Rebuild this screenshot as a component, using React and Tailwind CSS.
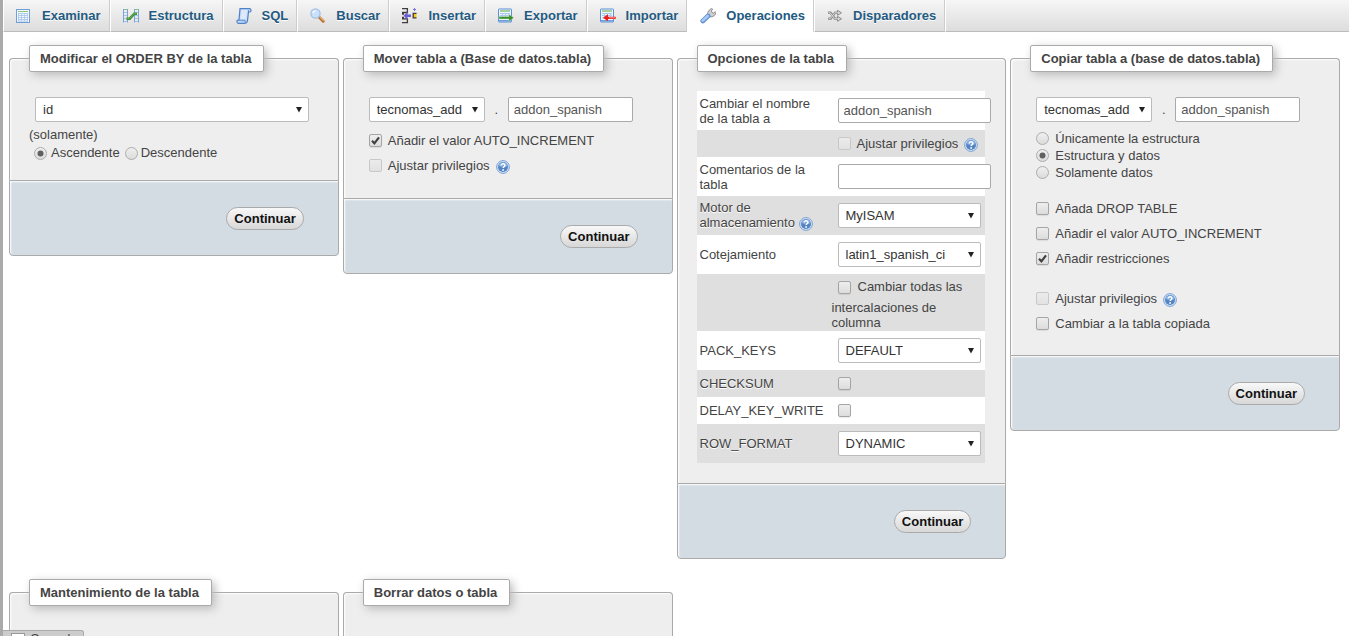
import React, { useId } from "react";

/* ---------- icons ---------- */

function Icon({ children }) {
  return (
    <svg width="16" height="16" viewBox="0 0 16 16" className="block shrink-0" aria-hidden="true">
      {children}
    </svg>
  );
}

function BrowseIcon() {
  return (
    <Icon>
      <rect x=".5" y="1.5" width="13" height="13" fill="#f4f9ff" stroke="#6f9edb" />
      <path d="M2 3.5h10" stroke="#8cc27c" />
      <path d="M2 5.5h10M2 7.5h10M2 9.5h10M2 11.5h10M2 13.200h10" stroke="#a9c6ea" strokeWidth=".9" />
      <path d="M2.500 5v8M5.500 5v8M8.500 5v8M11.500 5v8" stroke="#a9c6ea" strokeWidth=".8" />
    </Icon>
  );
}

function StructureIcon() {
  return (
    <Icon>
      <path d="M0 1.5h5M0 4.500h5M0 7.5h5M0 10.500h5M0 13.500h5" stroke="#a6c3ea" />
      <path d="M.5 1v13.5M4.500 1v13.5" stroke="#79a3dc" />
      <path d="M11 1.5h5M11 4.500h5M11 7.500h5M11 10.500h5M11 13.500h5" stroke="#a6c3ea" />
      <path d="M11.500 1v13.5M15.5 1v13.5" stroke="#79a3dc" />
      <path d="M1 1.500h3M12 1.500h3" stroke="#8cc27c" />
      <path d="M3.500 10.700h3.200l4.600-5h2.700" fill="none" stroke="#3a8f2e" strokeWidth="2.600" />
      <path d="M4.300 10.400h2.300l4.300-4.800h2.600" fill="none" stroke="#6dbb5c" strokeWidth=".9" />
    </Icon>
  );
}

function SqlIcon() {
  return (
    <Icon>
      <path d="M4 .7h9.500c1.800 0 2.100 2.800.5 3.300h-1.500l-1 8.500c-.3 2-1 2.800-2.500 2.800H2.500c-2 0-2.200-3-.5-3.200h1L4 .7z" fill="#c6dcf7" stroke="#4f82c8" strokeWidth="1.200" />
      <path d="M5.500 2h5.500l-1.200 9.500H4.500z" fill="#dceafb" />
      <path d="M2.500 12.200h6.500c.6 1 .6 2-.3 3" fill="#a8c8ef" stroke="#5e8fd0" />
      <path d="M12.500 4V2.300" stroke="#4f82c8" />
    </Icon>
  );
}

function SearchIcon() {
  return (
    <Icon>
      <path d="M9.500 9.500l3.700 3.700" stroke="#b9722f" strokeWidth="3" strokeLinecap="round" />
      <path d="M10.200 9.400l3.100 3" stroke="#e9b06f" strokeWidth="1.200" strokeLinecap="round" />
      <circle cx="5.500" cy="5.500" r="4.600" fill="#c9dffa" stroke="#a2c1e8" strokeWidth="1.300" />
      <path d="M3 5c.3-1.300 1.300-2 2.700-2" fill="none" stroke="#fff" strokeWidth="1.200" />
    </Icon>
  );
}

function InsertIcon() {
  return (
    <Icon>
      <path d="M0 .7h5.400v3.800H0M0 10.800h5.400v3.800H0M0 6h2M0 9.500h2" fill="none" stroke="#3d3d3d" strokeWidth="1.300" />
      <path d="M1.500 7.700l4-4v2.700h3.500v2.600H5.500v2.700z" fill="#6a5fd0" />
      <path d="M14.500 5.300h-3.300v4.600h3.300" fill="#f6c91c" stroke="#3d3d3d" strokeWidth="1.300" />
      <path d="M12.500 0v3M11 1.500h3" stroke="#7a70dc" />
    </Icon>
  );
}

function TransferTable({ arrow }) {
  return (
    <Icon>
      <rect x=".5" y="1" width="13" height="13" rx=".5" fill="#f1f7ff" stroke="#5b8fd6" />
      <path d="M2 3h10" stroke="#86c072" strokeWidth="1.400" />
      <path d="M2 5.500h10M2 7.500h10M2 10h10" stroke="#a9c6ea" />
      <path d="M4.500 5v6M7.500 5v6M10.500 5v6" stroke="#b4cdec" />
      <path d="M1 12.800h12" stroke="#6f9edb" strokeWidth="1.600" />
      {arrow}
    </Icon>
  );
}

function ExportIcon() {
  return (
    <TransferTable
      arrow={<path d="M1 8.600h10V6.200l4.800 3.600-4.800 3.600V11H1z" fill="#3a8f2e" stroke="#d8eed1" strokeWidth=".4" />}
    />
  );
}

function ImportIcon() {
  return (
    <TransferTable
      arrow={
        <>
          <path d="M15.700 8.700H8V6.300L3 9.800l5 3.500V11h7.700z" fill="#e8211c" />
          <path d="M9 9.800h6" stroke="#ff9a90" strokeWidth=".9" />
        </>
      }
    />
  );
}

function WrenchIcon() {
  return (
    <Icon>
      <path d="M8.300 8.400C6.600 6.500 7.800 2 11.600.6l1 .4-1.200 2.100.6 1.500 1.600.4 1.700-1.300.6.700c-.3 2.800-2.500 4.500-5 4.500z" fill="#d0d0d0" stroke="#858585" strokeWidth=".9" />
      <path d="M2.800 12.900L8 8" stroke="#5d8fd3" strokeWidth="4.800" strokeLinecap="round" />
      <path d="M2.800 12.600l4.900-4.700" stroke="#a9c9f4" strokeWidth="2.800" strokeLinecap="round" />
    </Icon>
  );
}

function TriggersIcon() {
  return (
    <Icon>
      <g fill="none" stroke="#8d8d8d" strokeWidth="2.400">
        <path d="M1 4.800h2.500l4.500 6h3.500M1 10.800h2.500l4.500-6h3.500" />
      </g>
      <path d="M10.500 2.300l4 2.500-4 2.500zM10.500 8.300l4 2.500-4 2.500z" fill="#d8d8d8" stroke="#8d8d8d" />
      <path d="M1.500 4.800h1.700l4.500 6h4M1.500 10.800h1.700l4.500-6h4" fill="none" stroke="#dedede" strokeWidth=".9" />
    </Icon>
  );
}

function HelpIcon() {
  return (
    <svg width="14" height="14" viewBox="0 0 14 14" className="block shrink-0" aria-hidden="true">
      <circle cx="7" cy="7" r="6.400" fill="#d5e3f5" stroke="#7ba1d4" />
      <circle cx="7" cy="7" r="5" fill="#5484c2" />
      <path d="M2.500 6a4.600 4.600 0 0 1 9 0c-2 1.500-6 1.500-9 0z" fill="#83abe0" />
      <path d="M5.200 5.500c0-2.300 3.700-2.200 3.700 0 0 1.300-1.800 1.200-1.800 2.600" fill="none" stroke="#fff" strokeWidth="1.500" />
      <circle cx="7.100" cy="10" r=".9" fill="#fff" />
    </svg>
  );
}

/* ---------- controls ---------- */

function Help() {
  return (
    <a href="#ayuda" aria-label="Documentación" className="inline-block align-middle">
      <HelpIcon />
    </a>
  );
}

function CheckBox({ id, checked, disabled }) {
  return (
    <span className="inline-grid size-[13px] shrink-0">
      <input
        id={id}
        type="checkbox"
        defaultChecked={checked}
        disabled={disabled}
        className="peer col-start-1 row-start-1 size-[13px] appearance-none rounded-[2px] border border-[#a5a5a5] bg-linear-to-b from-[#eeeeee] to-[#dcdcdc] shadow-[0_1px_1px_rgba(0,0,0,0.08)] disabled:border-[#c8c8c8] disabled:from-[#ebebeb] disabled:to-[#e2e2e2] disabled:shadow-none"
      />
      <svg viewBox="0 0 13 13" className="pointer-events-none col-start-1 row-start-1 hidden size-[13px] peer-checked:block" aria-hidden="true">
        <path d="M3 6.800l2.400 2.500L10 3.300" fill="none" stroke="#404040" strokeWidth="2.200" />
      </svg>
    </span>
  );
}

function Radio({ id, name, checked }) {
  return (
    <span className="inline-grid size-[13px] shrink-0">
      <input
        id={id}
        type="radio"
        name={name}
        defaultChecked={checked}
        className="peer col-start-1 row-start-1 size-[13px] appearance-none rounded-full border border-[#acacac] bg-linear-to-b from-[#efefef] to-[#dcdcdc]"
      />
      <svg viewBox="0 0 13 13" className="pointer-events-none col-start-1 row-start-1 hidden size-[13px] peer-checked:block" aria-hidden="true">
        <circle cx="6.500" cy="6.500" r="3" fill="#606060" />
      </svg>
    </span>
  );
}

function CheckRow({ label, checked, disabled, help }) {
  const id = useId();
  return (
    <div className="flex h-[25px] items-center pl-[6px]">
      <CheckBox id={id} checked={checked} disabled={disabled} />
      <label htmlFor={id} className="ml-[6px]">{label}</label>
      {help && <span className="ml-[6px] pt-[2px]"><Help /></span>}
    </div>
  );
}

function Select({ id, value, label, className }) {
  return (
    <span className={`inline-grid ${className}`}>
      <select
        id={id}
        aria-label={label}
        className="col-start-1 row-start-1 h-[25px] w-full appearance-none rounded-[2px] border border-[#bbb] bg-white pr-[16px] pl-[7px] text-[#333]"
      >
        <option>{value}</option>
      </select>
      <svg width="6" height="6" viewBox="0 0 6 6" className="pointer-events-none col-start-1 row-start-1 mr-[7px] self-center justify-self-end" aria-hidden="true">
        <path d="M0 0h6L3 5.500z" fill="#222" />
      </svg>
    </span>
  );
}

function TextBox({ id, value = "", label, className }) {
  return (
    <input
      id={id}
      type="text"
      aria-label={label}
      defaultValue={value}
      className={`h-[25px] rounded-[2px] border border-[#aaa] bg-white px-[5px] text-[#555] ${className}`}
    />
  );
}

/* ---------- panels ---------- */

function Panel({ title, children, footer = true }) {
  return (
    <form className="min-w-0" onSubmit={(e) => e.preventDefault()}>
      <fieldset className="min-w-0 rounded-t-[4px] border border-b-0 border-[#aaa] bg-[#eee] pr-5 pl-[19px] shadow-[inset_1px_1px_2px_#fff]">
        <legend className="h-[27px] rounded-[2px] border border-[#aaa] bg-white pr-[12px] pl-[10px] leading-[25px] font-bold whitespace-nowrap shadow-[3px_3px_10px_#bbb]">
          {title}
        </legend>
        {children}
      </fieldset>
      {footer && (
        <div className="flex justify-end rounded-b-[4px] border border-[#aaa] bg-[#d3dce3] pt-[26px] pr-[34px] pb-[25px] shadow-[inset_1px_1px_2px_#fff]">
          <button
            type="submit"
            className="h-[23px] rounded-full border border-[#aaa] bg-linear-to-b from-[#f8f8f8] to-[#d8d8d8] px-[7px] leading-[21px] font-bold text-[#111]"
          >
            Continuar
          </button>
        </div>
      )}
    </form>
  );
}

function TargetRow() {
  return (
    <div className="flex items-center pl-[6px]">
      <Select label="Base de datos" value="tecnomas_add" className="w-[116px]" />
      <span className="w-[23px] text-center">.</span>
      <TextBox label="Tabla" value="addon_spanish" className="w-[125px] min-w-0" />
    </div>
  );
}

function OrderPanel() {
  const asc = useId();
  const desc = useId();
  return (
    <Panel title="Modificar el ORDER BY de la tabla">
      <div className="pt-[25px] pb-[18px]">
        <div className="pr-[9px] pl-[6px]">
          <Select label="Columna" value="id" className="w-full" />
        </div>
        <div className="mt-[4px] leading-[18px]">(solamente)</div>
        <div className="flex items-center pl-[5px] leading-[18px]">
          <Radio id={asc} name="orden" checked />
          <label htmlFor={asc} className="ml-[4px]">Ascendente</label>
          <span className="ml-[5px] flex items-center">
            <Radio id={desc} name="orden" />
            <label htmlFor={desc} className="ml-[3px]">Descendente</label>
          </span>
        </div>
      </div>
    </Panel>
  );
}

function MovePanel() {
  return (
    <Panel title="Mover tabla a (Base de datos.tabla)">
      <div className="pt-[25px] pb-[20px]">
        <TargetRow />
        <div className="mt-[6px]">
          <CheckRow label="Añadir el valor AUTO_INCREMENT" checked />
          <CheckRow label="Ajustar privilegios" disabled help />
        </div>
      </div>
    </Panel>
  );
}

function OptionRow({ head, height, children }) {
  return (
    <tr className={`${height} odd:bg-white even:bg-[#dfdfdf]`}>
      <th scope="row" className="px-[3px] text-left align-middle leading-[15px] font-normal [text-shadow:0_1px_0_#fff]">
        {head}
      </th>
      <td className="px-[3px] align-middle">{children}</td>
    </tr>
  );
}

function OptionsPanel() {
  const tall = "h-[39px]";
  const short = "h-[27px]";
  const id = useId();
  return (
    <Panel title="Opciones de la tabla">
      <div className="pt-[19px] pb-[20px]">
        <table className="w-full table-fixed border-collapse">
          <colgroup>
            <col className="w-[132px]" />
            <col />
          </colgroup>
          <tbody>
            <OptionRow height={tall} head={<label htmlFor={id + "name"}>Cambiar el nombre de la tabla a</label>}>
              <TextBox id={id + "name"} value="addon_spanish" className="ml-[6px] block w-[153px]" />
            </OptionRow>
            <OptionRow height={short}>
              <CheckRow label="Ajustar privilegios" disabled help />
            </OptionRow>
            <OptionRow height={tall} head={<label htmlFor={id + "comment"}>Comentarios de la tabla</label>}>
              <TextBox id={id + "comment"} className="ml-[6px] block w-[153px]" />
            </OptionRow>
            <OptionRow
              height={tall}
              head={
                <>
                  <label htmlFor={id + "engine"}>Motor de almacenamiento</label> <Help />
                </>
              }
            >
              <Select id={id + "engine"} value="MyISAM" className="ml-[6px] w-[143px] align-middle" />
            </OptionRow>
            <OptionRow height={tall} head={<label htmlFor={id + "coll"}>Cotejamiento</label>}>
              <Select id={id + "coll"} value="latin1_spanish_ci" className="ml-[6px] w-[143px] align-middle" />
            </OptionRow>
            <OptionRow height="h-[57px]">
              <div className="leading-[15px]">
                <span className="mr-[7px] ml-[6px] inline-flex h-[25px] items-center align-middle">
                  <CheckBox id={id + "all"} />
                </span>
                <label htmlFor={id + "all"}>Cambiar todas las intercalaciones de columna</label>
              </div>
            </OptionRow>
            <OptionRow height={tall} head={<label htmlFor={id + "pack"}>PACK_KEYS</label>}>
              <Select id={id + "pack"} value="DEFAULT" className="ml-[6px] w-[143px] align-middle" />
            </OptionRow>
            <OptionRow height={short} head={<label htmlFor={id + "sum"}>CHECKSUM</label>}>
              <div className="flex pl-[6px]"><CheckBox id={id + "sum"} /></div>
            </OptionRow>
            <OptionRow height={short} head={<label htmlFor={id + "delay"}>DELAY_KEY_WRITE</label>}>
              <div className="flex pl-[6px]"><CheckBox id={id + "delay"} /></div>
            </OptionRow>
            <OptionRow height={tall} head={<label htmlFor={id + "row"}>ROW_FORMAT</label>}>
              <Select id={id + "row"} value="DYNAMIC" className="ml-[6px] w-[143px] align-middle" />
            </OptionRow>
          </tbody>
        </table>
      </div>
    </Panel>
  );
}

function CopyPanel() {
  const id = useId();
  const modes = ["Únicamente la estructura", "Estructura y datos", "Solamente datos"];
  return (
    <Panel title="Copiar tabla a (base de datos.tabla)">
      <div className="pt-[25px] pb-[19px]">
        <TargetRow />
        <div className="mt-[8px] mb-[15px]">
          {modes.map((mode, i) => (
            <div key={mode} className="flex h-[17px] items-center pl-[6px]">
              <Radio id={id + i} name="modo" checked={i === 1} />
              <label htmlFor={id + i} className="ml-[6px]">{mode}</label>
            </div>
          ))}
        </div>
        <CheckRow label="Añada DROP TABLE" />
        <CheckRow label="Añadir el valor AUTO_INCREMENT" />
        <CheckRow label="Añadir restricciones" checked />
        <div className="mt-[15px]">
          <CheckRow label="Ajustar privilegios" disabled help />
          <CheckRow label="Cambiar a la tabla copiada" />
        </div>
      </div>
    </Panel>
  );
}

/* ---------- page ---------- */

const TABS = [
  ["Examinar", BrowseIcon],
  ["Estructura", StructureIcon],
  ["SQL", SqlIcon],
  ["Buscar", SearchIcon],
  ["Insertar", InsertIcon],
  ["Exportar", ExportIcon],
  ["Importar", ImportIcon],
  ["Operaciones", WrenchIcon],
  ["Disparadores", TriggersIcon],
];

function Tabs() {
  return (
    <nav className="flex h-8 bg-linear-to-b from-[#f6f6f6] to-[#dcdcdc]">
      {TABS.map(([label, TabIcon]) => {
        const active = label === "Operaciones";
        return (
          <a
            key={label}
            href={"#" + label.toLowerCase()}
            aria-current={active ? "page" : undefined}
            className={`flex items-center gap-[10px] border-x border-b border-l-white border-r-[#ccc] pr-[8px] pl-[12px] font-bold text-[#235a81] [text-shadow:0_1px_0_#fff] ${
              active ? "border-b-white bg-white" : "border-b-[#bbb]"
            }`}
          >
            <TabIcon />
            {label}
          </a>
        );
      })}
      <span className="grow border-b border-l border-b-[#bbb] border-l-white" />
    </nav>
  );
}

export default function App() {
  return (
    <div className="h-screen overflow-hidden border-l-[3px] border-[#aaa] bg-white font-['Liberation_Sans',Arial,sans-serif] text-[13px] leading-[15px] text-[#444]">
      <Tabs />
      <main className="grid grid-cols-4 items-start gap-x-1 gap-y-5 pt-[13px] pr-[9px] pl-[6px]">
        <OrderPanel />
        <MovePanel />
        <OptionsPanel />
        <CopyPanel />
        <Panel title="Mantenimiento de la tabla" footer={false}>
          <div className="h-16" />
        </Panel>
        <Panel title="Borrar datos o tabla" footer={false}>
          <div className="h-16" />
        </Panel>
      </main>
      <button
        type="button"
        className="fixed bottom-0 left-[3px] flex h-[6px] items-start gap-[5px] overflow-hidden rounded-tr-[3px] border-t border-r border-[#aaa] bg-[#ccc] pt-[2px] pr-[5px] pl-[8px] leading-[11px]"
      >
        <svg width="14" height="14" viewBox="0 0 14 14" className="block shrink-0" aria-hidden="true">
          <rect x=".5" y=".5" width="13" height="13" fill="#fff" stroke="#999" />
        </svg>
        Consola
      </button>
    </div>
  );
}
